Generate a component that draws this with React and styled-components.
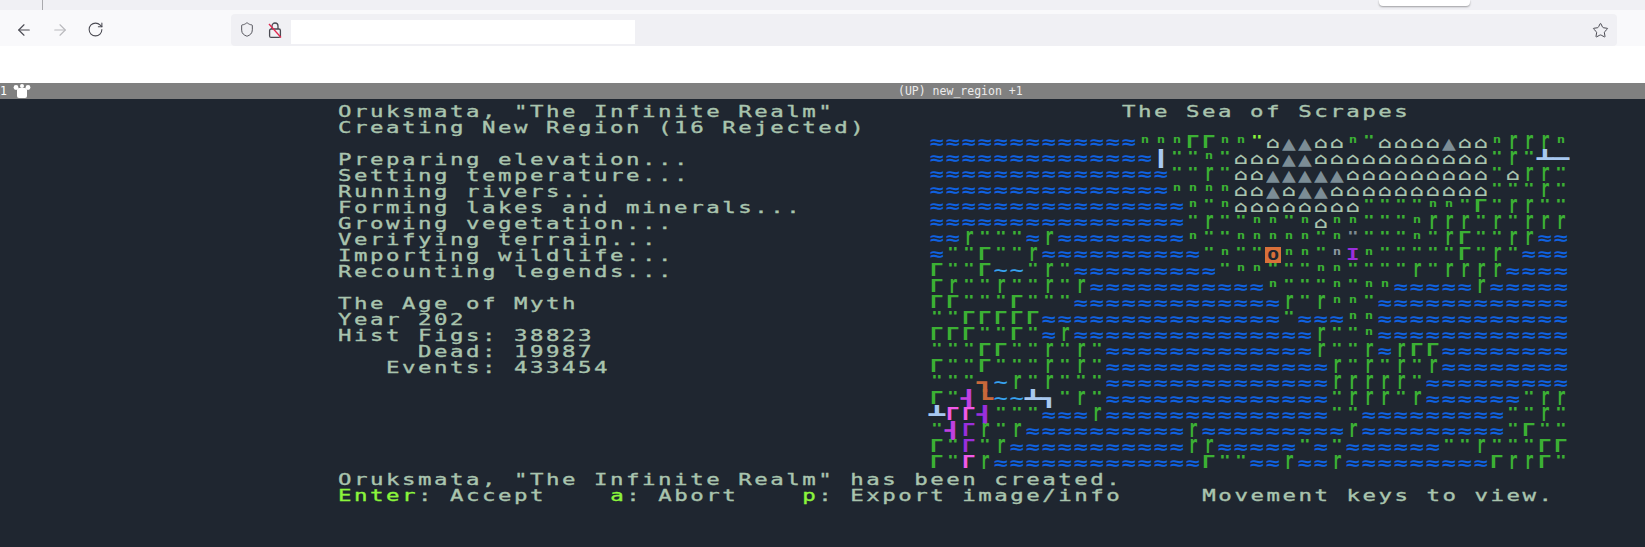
import React from 'react';
import styled, { createGlobalStyle } from 'styled-components';
import { ArrowLeft, ArrowRight, RotateCw, Shield, Star } from 'lucide-react';

const Global = createGlobalStyle`
  html, body { margin: 0; padding: 0; background: #1f2630; overflow: hidden; }
  #root { width: 1645px; height: 547px; }
`;

const Page = styled.div`
  width: 1645px;
  height: 547px;
  display: flex;
  flex-direction: column;
  overflow: hidden;
`;

const TabStrip = styled.div`
  height: 10px;
  flex: none;
  background: #f0f0f4;
  position: relative;
`;

const TabDivider = styled.div`
  position: absolute;
  left: 42px;
  top: 0;
  width: 1px;
  height: 10px;
  background: #a9a9ad;
`;

const ActiveTabEdge = styled.div`
  position: absolute;
  left: 1379px;
  top: 0;
  width: 91px;
  height: 6px;
  background: #fff;
  border-radius: 0 0 4px 4px;
  box-shadow: 0 1px 2px rgba(0, 0, 0, 0.35);
`;

const Toolbar = styled.div`
  height: 36px;
  flex: none;
  background: #f9f9fb;
  display: flex;
  align-items: center;
  padding: 4px 28px 0 15px;
  box-sizing: border-box;
`;

const NavButton = styled.div`
  width: 18px;
  height: 18px;
  margin-right: 18px;
  color: ${p => (p.$disabled ? '#b9b9bd' : '#4a4a52')};
  display: flex;
`;

const UrlBar = styled.div`
  margin-left: 108px;
  flex: 1;
  height: 32px;
  background: #f0f0f4;
  border-radius: 4px;
  display: flex;
  align-items: center;
  padding: 0 8px;
  color: #4a4a52;
`;

const UrlIcon = styled.div`
  width: 16px;
  height: 18px;
  display: flex;
  margin-right: 12px;
`;

const UrlInput = styled.div`
  width: 344px;
  height: 24px;
  background: #fff;
  margin: 4px 0 0 -4px;
`;

const StarSlot = styled.div`
  margin-left: auto;
  display: flex;
`;

const WhiteBand = styled.div`
  height: 37px;
  flex: none;
  background: #fff;
`;

const StatusBar = styled.div`
  height: 16px;
  flex: none;
  background: #808080;
  display: flex;
  align-items: center;
  font-family: "DejaVu Sans Mono", monospace;
  font-size: 11.5px;
  color: #ececec;
  position: relative;
`;

const PaneNumber = styled.span`
  width: 13px;
  color: #fff;
`;

const StatusTitle = styled.span`
  position: absolute;
  left: 898px;
  top: 0;
  line-height: 16px;
  white-space: pre;
`;

const Terminal = styled.div`
  flex: 1;
  background: #1f2630;
  padding: 4px 0 0 337px;
  font-family: "DejaVu Sans Mono", monospace;
  font-size: 16px;
  color: #a9c4ae;
  overflow: hidden;
`;

const Upper = styled.div`
  display: flex;
`;

const LeftColumn = styled.div`
  width: 592px;
  flex: none;
`;

const RightColumn = styled.div`
  width: 640px;
  flex: none;
`;

const Line = styled.div`
  height: 16px;
  line-height: 16px;
  white-space: pre;
  letter-spacing: 1.8px;
  -webkit-text-stroke: 0.35px currentColor;
  transform: translate(1px, 1px) scaleX(1.4);
  transform-origin: left center;
`;

const Key = styled.span`
  color: #8cf53c;
`;

const TitleRow = styled(Line)`
  height: 32px;
  padding-left: 137.2px;
`;

const MapGrid = styled.div`
  display: grid;
  grid-template-columns: repeat(40, 16px);
  grid-auto-rows: 16px;
`;

const Cell = styled.div`
  width: 16px;
  height: 16px;
  display: flex;
  align-items: center;
  justify-content: center;
  background: ${p => p.$bg || 'transparent'};
  color: ${p => p.$color};
  font-family: "DejaVu Sans Mono", monospace;
  font-weight: ${p => p.$weight};
  font-size: ${p => p.$size}px;
  line-height: 16px;
`;

const Glyph = styled.span`
  display: inline-block;
  transform: scale(${p => p.$sx}, ${p => p.$sy}) translateY(${p => p.$dy}px);
`;

const GREEN = '#3cb034';
const RIVER = '#a8c8f0';
const ORANGE = '#c9683a';
const PURPLE = '#9a2fdc';
const PINK = '#f25ae8';

const grass = { ch: '"', color: GREEN, size: 13, sx: 1.5, sy: 1, dy: -3, weight: 'bold' };
const shrub = { ch: 'n', color: GREEN, size: 10, sx: 1.4, sy: 1, dy: -3, weight: 'bold' };
const bigTree = { ch: 'Γ', color: GREEN, size: 16, sx: 1.45, sy: 1.05, dy: 0, weight: 'bold' };
const box = { size: 16, sx: 1.7, sy: 1, dy: 0, weight: 'normal' };

const legend = {
  w: { ch: '≈', color: '#0f62e0', size: 16, sx: 1.5, sy: 1.1, dy: 0, weight: 'bold' },
  g: grass,
  G: { ...grass, color: '#8cf53c' },
  x: { ...grass, color: '#7d8a90' },
  n: shrub,
  N: { ...shrub, color: '#8a98a0' },
  T: bigTree,
  // a tall r is the closest installed shape to the tileset's tree
  f: { ch: 'r', color: GREEN, size: 14, sx: 1.05, sy: 1.75, dy: -1.4, weight: 'bold' },
  h: { ch: '⌂', color: '#a9c4ae', size: 16, sx: 1.4, sy: 1, dy: 0, weight: 'bold' },
  m: { ch: '▲', color: '#7c8d96', size: 20, sx: 1.15, sy: 1, dy: 0, weight: 'normal' },
  '~': { ch: '~', color: '#37a2ef', size: 16, sx: 1.5, sy: 1, dy: 0, weight: 'bold' },
  O: { ch: 'O', color: '#1f2630', bg: '#d9703a', size: 14, sx: 1.4, sy: 1, dy: 0, weight: 'bold' },
  I: { ch: 'I', color: PURPLE, size: 16, sx: 1.4, sy: 1, dy: 0, weight: 'bold' },
  '|': { ch: '┃', color: RIVER, ...box },
  b: { ch: '┻', color: RIVER, ...box },
  '-': { ch: '━', color: RIVER, ...box },
  '7': { ch: '┓', color: RIVER, ...box },
  o: { ch: '┓', color: ORANGE, ...box },
  L: { ch: '┗', color: ORANGE, ...box },
  P: { ch: '┫', color: PURPLE, ...box },
  p: { ch: '┫', color: '#c040e0', ...box },
  M: { ...bigTree, color: PINK },
  V: { ...bigTree, color: PURPLE },
};

// one string per map row, one letter per cell, see legend
const worldMap = [
  'wwwwwwwwwwwwwnnnTTnnGhmmhhnghhhhmhhnfffn',
  'wwwwwwwwwwwwww|ggnghhhmmhhhhhhhhhhhgfgb-',
  'wwwwwwwwwwwwwwwggfghhmmmmmhhhhhhhhhghffg',
  'wwwwwwwwwwwwwwwnnnnhhmhmmhhhhhhhhhhgggfg',
  'wwwwwwwwwwwwwwwwngnhhhhhhhhggggnngTgffgg',
  'wwwwwwwwwwwwwwwwgfggnngnhnngggnfffgfgfff',
  'wwfgggwfwwwwwwwwnggnnnnngnxgggngfTggffww',
  'wggTggfwwwwwwwwwwgnggOnngNIngggggTgfgwww',
  'TggT~~gfgwwwwwwwwwgnngggnnggggfgffffwwww',
  'Tfggfggfgfwwwwwwwwwwwngggngnnwwwwwfwwwww',
  'TTgggTgggwwwwwwwwwwwwwfgfnngwwwwwwwwwwww',
  'ggTTTTTwwwwwwwwwwwwwwwgwwwnnwwwwwwwwwwww',
  'TTTggTgwfwwwwwwwwwwwwwwwfggnwwwwwwwwwwww',
  'gggTTggfgfgwwwwwwwwwwwwwfggfwfTTwwwwwwww',
  'TggTgggfgfgwwwwwwwwwwwwwwfgfgfgfwwwwwwww',
  'gggo~fgfgggwwwwwwwwwwwwwwfffffgwwwwwwwww',
  'TgpL~~b7gfgwwwwwwwwwwwwwwgfffgfwwwwwwgff',
  'bMMPgggwwwfwwwwwwwwwwwwwwggwwwwwwwwwggfg',
  'gpVfgfwwwwwwwwwwfwwwwwwwwwfwwwwwwwwwgTgg',
  'TgVgfwwwwwwwwwwwffwwwwwgwgwwwwwwggfgggTT',
  'TgMfwwwwwwwwwwwwwTggwwfwwfwwwwwwwwwTffTg',
];

const CellView = ({ code }) => {
  const def = legend[code] || legend.w;
  return (
    <Cell $color={def.color} $bg={def.bg} $size={def.size} $weight={def.weight}>
      <Glyph $sx={def.sx} $sy={def.sy} $dy={def.dy}>{def.ch}</Glyph>
    </Cell>
  );
};

const logLines = [
  'Oruksmata, "The Infinite Realm"',
  'Creating New Region (16 Rejected)',
  '',
  'Preparing elevation...',
  'Setting temperature...',
  'Running rivers...',
  'Forming lakes and minerals...',
  'Growing vegetation...',
  'Verifying terrain...',
  'Importing wildlife...',
  'Recounting legends...',
  '',
  'The Age of Myth',
  'Year 202',
  'Hist Figs: 38823',
  '     Dead: 19987',
  '   Events: 433454',
];

const InsecureLock = () => (
  <svg width="16" height="18" viewBox="0 0 16 18" fill="none">
    <path d="M5 8V5a3 3 0 0 1 6 0v3" stroke="#4a4a52" strokeWidth="1.3" />
    <rect x="2.6" y="8" width="10.8" height="8.4" rx="1.5" stroke="#4a4a52" strokeWidth="1.3" />
    <path d="M2 3l12 13.5" stroke="#e22850" strokeWidth="1.3" />
  </svg>
);

const PaneIcon = () => (
  <svg width="18" height="14" viewBox="0 0 18 14" fill="#fff">
    <rect x="4" y="4" width="10" height="10" rx="2" />
    <circle cx="3" cy="3.5" r="2.4" />
    <circle cx="15" cy="3.5" r="2.4" />
    <circle cx="9" cy="2" r="2" />
  </svg>
);

const App = () => (
  <Page>
    <Global />
    <TabStrip>
      <TabDivider />
      <ActiveTabEdge />
    </TabStrip>
    <Toolbar>
      <NavButton><ArrowLeft size={18} strokeWidth={1.5} /></NavButton>
      <NavButton $disabled><ArrowRight size={18} strokeWidth={1.5} /></NavButton>
      <NavButton><RotateCw size={17} strokeWidth={1.5} /></NavButton>
      <UrlBar>
        <UrlIcon><Shield size={17} strokeWidth={1.4} /></UrlIcon>
        <UrlIcon><InsecureLock /></UrlIcon>
        <UrlInput />
        <StarSlot><Star size={17} strokeWidth={1.4} /></StarSlot>
      </UrlBar>
    </Toolbar>
    <WhiteBand />
    <StatusBar>
      <PaneNumber>1</PaneNumber>
      <PaneIcon />
      <StatusTitle>(UP) new_region +1</StatusTitle>
    </StatusBar>
    <Terminal>
      <Upper>
        <LeftColumn>
          {logLines.map((line, index) => <Line key={index}>{line}</Line>)}
        </LeftColumn>
        <RightColumn>
          <TitleRow>The Sea of Scrapes</TitleRow>
          <MapGrid>
            {worldMap.map((row, y) =>
              row.split('').map((code, x) => <CellView key={`${x}-${y}`} code={code} />)
            )}
          </MapGrid>
        </RightColumn>
      </Upper>
      <Line>Oruksmata, "The Infinite Realm" has been created.</Line>
      <Line>
        <Key>Enter</Key>: Accept    <Key>a</Key>: Abort    <Key>p</Key>: Export image/info     Movement keys to view.
      </Line>
    </Terminal>
  </Page>
);

export default App;
